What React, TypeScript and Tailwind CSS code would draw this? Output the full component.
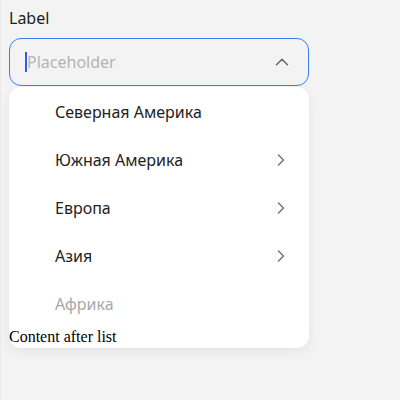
import { ChevronRight, ChevronUp } from "lucide-react";

type Region = { name: string; children?: boolean; disabled?: boolean };

const regions: Region[] = [
  { name: "Северная Америка" },
  { name: "Южная Америка", children: true },
  { name: "Европа", children: true },
  { name: "Азия", children: true },
  { name: "Африка", disabled: true },
];

export default function App() {
  return (
    <div className="min-h-screen bg-[#f3f3f3]">
      <div className="min-h-screen border-l border-[#ebebeb] px-2 pt-2">
        <div className="w-[300px] font-['Noto_Sans',sans-serif]">
          <label className="block text-[16px] leading-5 text-[#1c1c1c]">Label</label>

          {/* select trigger */}
          <div className="mt-[10px] flex h-[48px] items-center rounded-[12px] border border-[#3b7cf0] pl-[15px] pr-[15px]">
            <span className="h-5 w-[2px] bg-[#2f5fe0]" />
            <span className="flex-1 text-[16px] text-[#b4b4b4]">Placeholder</span>
            <ChevronUp width={22} height={22} strokeWidth={1.6} className="text-[#666666]" />
          </div>

          {/* options list */}
          <ul className="relative mt-px -mb-[20px] rounded-[12px] bg-white pt-px pb-[20px] shadow-[0_4px_12px_rgba(0,0,0,0.06)]">
            {regions.map((r) => (
              <li
                key={r.name}
                className={`flex h-[48px] items-center pl-[46px] pr-[18px] text-[16px] ${
                  r.disabled ? "text-[#a8a8a8]" : "text-[#222222]"
                }`}
              >
                <span className="flex-1">{r.name}</span>
                {r.children && (
                  <ChevronRight width={20} height={20} strokeWidth={1.6} className="text-[#707070]" />
                )}
              </li>
            ))}
          </ul>
        </div>

        <p className="relative font-['Liberation_Serif',serif] text-[16px] leading-[18px] text-black">
          Content after list
        </p>
      </div>
    </div>
  );
}
